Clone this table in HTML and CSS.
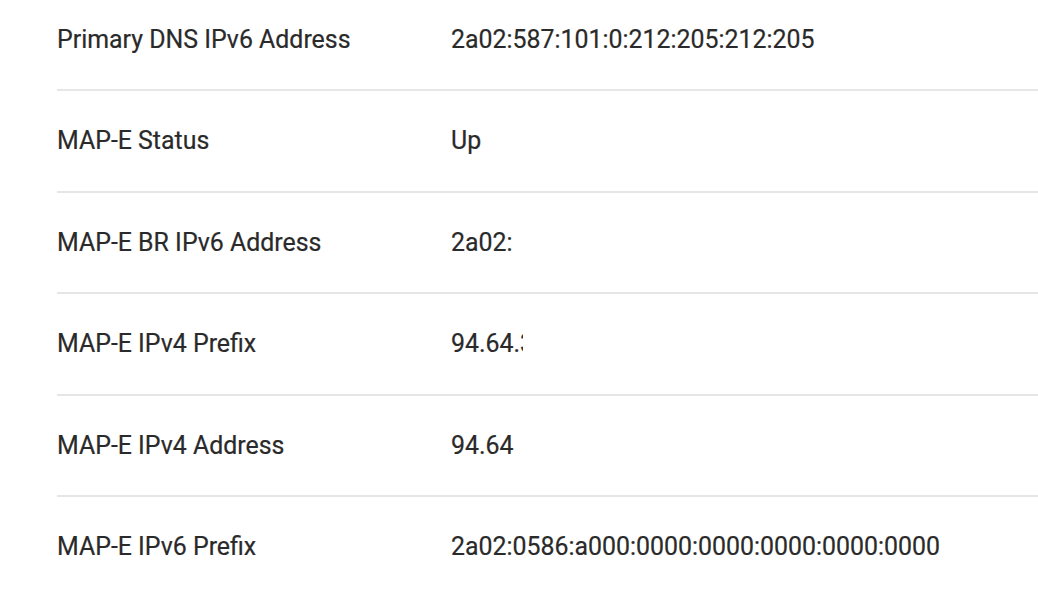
FILE: index.html
```html
<!DOCTYPE html>
<html lang="en">
<head>
    <meta charset="UTF-8">
    <meta name="viewport" content="width=device-width, initial-scale=1.0">
    <title>MAP-E Status</title>
    <link rel="stylesheet" href="styles.css">
</head>
<body>
    <div class="info-list">
        <div class="info-row">
            <div class="info-label">Primary DNS IPv6 Address</div>
            <div class="info-value">2a02:587:101:0:212:205:212:205</div>
        </div>
        <div class="info-row">
            <div class="info-label">MAP-E Status</div>
            <div class="info-value">Up</div>
        </div>
        <div class="info-row">
            <div class="info-label">MAP-E BR IPv6 Address</div>
            <div class="info-value">2a02:</div>
        </div>
        <div class="info-row">
            <div class="info-label">MAP-E IPv4 Prefix</div>
            <div class="info-value"><span class="masked">94.64.3</span></div>
        </div>
        <div class="info-row">
            <div class="info-label">MAP-E IPv4 Address</div>
            <div class="info-value">94.64</div>
        </div>
        <div class="info-row">
            <div class="info-label">MAP-E IPv6 Prefix</div>
            <div class="info-value">2a02:0586:a000:0000:0000:0000:0000:0000</div>
        </div>
    </div>
</body>
</html>
```

FILE: styles.css
```css
body {
    margin: 0;
    background-color: #fff;
    font-family: Roboto, "Liberation Sans", sans-serif;
    color: #2a2a2a;
    overflow: hidden;
}
.info-list {
    margin-top: -10.5px;
    padding-left: 57px;
}
.info-row {
    display: flex;
    align-items: center;
    height: 99.5px;
    border-bottom: 2px solid #e6e6e6;
    font-size: 24.9px;
    -webkit-text-stroke: 0.2px #2a2a2a;
}
.info-row:last-child {
    border-bottom: none;
}
.info-label {
    width: 394px;
}
.info-value {
    white-space: nowrap;
}
.masked {
    display: inline-block;
    width: 72px;
    overflow: hidden;
    vertical-align: bottom;
}
```
